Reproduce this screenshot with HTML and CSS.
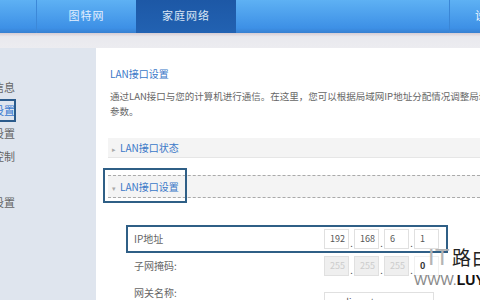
FILE: index.html
```html
<!DOCTYPE html>
<html lang="zh-CN">
<head>
  <meta charset="UTF-8" />
  <title>LAN接口设置</title>
  <link rel="stylesheet" href="styles.css">
</head>
<body>
  <!-- Top navigation -->
  <div class="topbar">
    <div class="nav-edge"></div>
    <div class="nav-tab">图特网</div>
    <div class="nav-tab active">家庭网络</div>
    <div class="nav-fill"></div>
    <div class="nav-tab right">设置</div>
  </div>
  <div class="subbar"></div>

  <div class="main">
    <!-- Sidebar -->
    <ul class="side">
      <li>系统信息</li>
      <li class="on">LAN设置</li>
      <li>WLAN设置</li>
      <li>家长控制</li>
      <li class="blank"></li>
      <li>高级设置</li>
    </ul>

    <!-- Content -->
    <div class="content">
      <h3 class="title">LAN接口设置</h3>
      <p class="desc">通过LAN接口与您的计算机进行通信。在这里，您可以根据局域网IP地址分配情况调整局域网<br>参数。</p>

      <div class="section closed"><span class="arrow">▸</span>LAN接口状态</div>

      <div class="section open">
        <span class="arrow">▾</span>LAN接口设置
        <span class="mark mark-head"></span>
      </div>

      <div class="form">
        <div class="row">
          <span class="label">IP地址</span>
          <div class="ip">
            <span class="box">192</span><span class="dot">.</span>
            <span class="box">168</span><span class="dot">.</span>
            <span class="box">6</span><span class="dot">.</span>
            <span class="box">1</span>
          </div>
          <span class="mark mark-row"></span>
        </div>
        <div class="row">
          <span class="label">子网掩码:</span>
          <div class="ip">
            <span class="box off">255</span><span class="dot">.</span>
            <span class="box off">255</span><span class="dot">.</span>
            <span class="box off">255</span><span class="dot">.</span>
            <span class="box strong">0</span>
          </div>
        </div>
        <div class="row">
          <span class="label">网关名称:</span>
          <span class="box wide">mediarouter</span>
        </div>
      </div>
    </div>
  </div>

  <!-- Watermark -->
  <div class="watermark">
    <div class="wm-top"><span class="wm-it">IT</span>路由</div>
    <div class="wm-url"><span class="wm-www">WWW.</span>LUYOUQI.COM</div>
  </div>
</body>
</html>
```

FILE: styles.css
```css
body {
  margin: 0;
  width: 480px;
  height: 300px;
  overflow: hidden;
  position: relative;
  font-family: "Noto Sans CJK SC", "Noto Sans", sans-serif;
  background: #fff;
}
.topbar {
  display: flex;
  height: 33px;
  background: linear-gradient(#5eb1f4, #3d90e6 85%, #3780d0);
  color: #e4f0ff;
  font-size: 11px;
  overflow: hidden;
}
.topbar > div {
  flex-shrink: 0;
}
.nav-edge {
  width: 36px;
  border-right: 1px solid #3c88d8;
}
.nav-tab {
  width: 99px;
  line-height: 30px;
  text-align: center;
  letter-spacing: 1px;
}
.nav-tab.active {
  width: 100px;
  background: linear-gradient(#1d58a6, #2262b2);
  color: #dbe6f5;
}
.nav-fill {
  width: 213px;
  border-right: 1px solid #3a86d6;
}
.nav-tab.right {
  width: 60px;
  text-align: left;
  padding-left: 25px;
  color: #f2f8ff;
}
.subbar {
  height: 15px;
  background: linear-gradient(#d6ccd2, #e9e9ee 25%, #ececf0);
}
.main {
  display: flex;
  height: 252px;
}
.side {
  flex-shrink: 0;
  width: 96px;
  margin: 0;
  padding: 28px 0 0;
  list-style: none;
  background: #dfe5ee;
  overflow: hidden;
  font-size: 11px;
  color: #666;
}
.side li {
  position: relative;
  width: 56px;
  margin-left: -41px;
  height: 23px;
  line-height: 23px;
  text-align: right;
}
.side li.on {
  color: #3a7ad0;
}
.side li.on::after {
  content: "";
  position: absolute;
  left: 39px;
  top: 0;
  width: 14px;
  height: 19px;
  border: 2px solid #2b5b8c;
}
.content {
  flex: 1;
  min-width: 0;
  padding-left: 12px;
  font-size: 10px;
  color: #555;
}
.title {
  margin: 19px 0 8px 2px;
  font-size: 10px;
  line-height: 14px;
  font-weight: normal;
  color: #3a78c8;
}
.desc {
  margin: 0 0 19px 2px;
  font-size: 9.5px;
  line-height: 15px;
  white-space: nowrap;
  color: #666;
}
.section {
  position: relative;
  height: 19px;
  line-height: 19px;
  padding-left: 4px;
  background: #f4f4f4;
  color: #3a78c8;
}
.section .arrow {
  display: inline-block;
  width: 8px;
  font-size: 7px;
  color: #aaa;
}
.section.closed {
  border-bottom: 1px solid #e6e6e6;
}
.section.open {
  margin-top: 17px;
  height: 21px;
  line-height: 21px;
  border-top: 1px dashed #aaa;
  border-bottom: 1px dashed #aaa;
}
.mark {
  position: absolute;
  border: 2px solid #2f5f86;
}
.mark-head {
  left: -5px;
  top: -8px;
  width: 80px;
  height: 31px;
}
.form {
  padding: 27px 0 0 26px;
}
.row {
  position: relative;
  display: flex;
  align-items: center;
  height: 27px;
}
.label {
  flex-shrink: 0;
  width: 190px;
  color: #666;
}
.ip {
  display: flex;
  align-items: flex-end;
}
.box {
  flex-shrink: 0;
  box-sizing: border-box;
  width: 25px;
  height: 20px;
  line-height: 18px;
  padding-left: 5px;
  border: 1px solid #e0e0e0;
  font-size: 9px;
  color: #555;
  background: #fff;
}
.box.off {
  background: #efefef;
  color: #ccc;
}
.box.strong {
  color: #333;
  font-weight: bold;
  border-color: #f0f0f0;
}
.box.wide {
  width: 110px;
  align-self: flex-end;
  margin-bottom: -6px;
}
.dot {
  width: 5px;
  text-align: center;
  font-size: 9px;
  line-height: 10px;
}
.mark-row {
  left: -8px;
  top: 0;
  width: 318px;
  height: 24px;
}
.watermark {
  position: absolute;
  z-index: 2;
  left: 414px;
  top: 244px;
  width: 90px;
  white-space: nowrap;
}
.wm-top {
  padding-left: 14px;
  font-size: 19px;
  line-height: 26px;
  color: #222;
  letter-spacing: 1px;
}
.wm-it {
  font-family: "DejaVu Sans", sans-serif;
  color: #b4b4b4;
  font-size: 22px;
  margin-right: 2px;
}
.wm-url {
  font-family: "Liberation Sans", sans-serif;
  font-size: 14px;
  line-height: 18px;
  font-weight: bold;
  color: #111;
}
.wm-www {
  font-weight: normal;
  color: #888;
}
```
